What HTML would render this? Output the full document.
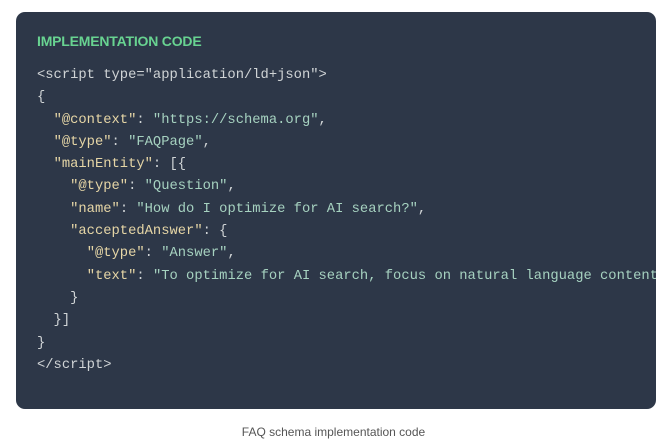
<!DOCTYPE html>
<html><head><style>
html,body{margin:0;padding:0;background:#fff;width:667px;height:443px;overflow:hidden}
.card{position:absolute;left:16px;top:12px;width:640px;height:397px;background:#2d3748;border-radius:9px;overflow:hidden}
.t{position:absolute;left:21px;top:21px;font:bold 14px "Liberation Sans",sans-serif;color:#68d391;letter-spacing:-0.2px}
pre{position:absolute;left:21px;top:53px;margin:0;font:13.8px/22.3px "Liberation Mono",monospace;color:#d0d4d6;white-space:pre}
.k{color:#e6d6a6}.s{color:#a6d2c0}
.cap{position:absolute;top:425px;left:0;width:667px;text-align:center;font:12px "Liberation Sans",sans-serif;color:#555}
</style></head><body>
<div class="card"><div class="t">IMPLEMENTATION CODE</div>
<pre>&lt;script type="application/ld+json"&gt;
{
  <span class="k">"@context"</span>: <span class="s">"https://schema.org"</span>,
  <span class="k">"@type"</span>: <span class="s">"FAQPage"</span>,
  <span class="k">"mainEntity"</span>: [{
    <span class="k">"@type"</span>: <span class="s">"Question"</span>,
    <span class="k">"name"</span>: <span class="s">"How do I optimize for AI search?"</span>,
    <span class="k">"acceptedAnswer"</span>: {
      <span class="k">"@type"</span>: <span class="s">"Answer"</span>,
      <span class="k">"text"</span>: <span class="s">"To optimize for AI search, focus on natural language content</span>
    }
  }]
}
&lt;/script&gt;</pre></div>
<div class="cap">FAQ schema implementation code</div>
</body></html>
